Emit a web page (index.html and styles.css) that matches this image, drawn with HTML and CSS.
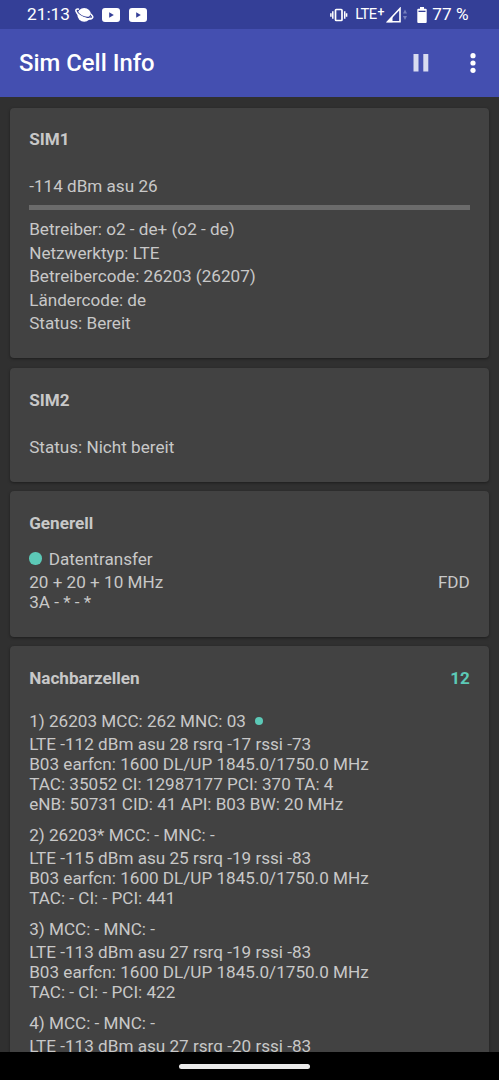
FILE: index.html
```html
<!DOCTYPE html>
<html lang="de">
<head>
<meta charset="utf-8">
<title>Sim Cell Info</title>
<link rel="stylesheet" href="styles.css">
</head>
<body>
<div class="screen">
  <div class="status">
    <span class="clock">21:13</span>
    <svg class="planet" width="20" height="16" viewBox="0 0 20 16"><circle cx="9.2" cy="7.800" r="6.900" fill="#fff"/><path d="M2.600 5C4 8 8.500 10.200 12 10.400 14.500 10.500 15.800 9.400 15.600 7.500" fill="none" stroke="#343f97" stroke-width="1.200"/><path d="M4 2.200C1.600 1.500.500 2.500 1 4.200 1.800 7 6.500 10.800 12 11.700 16.200 12.400 18.600 11.300 17.500 9.100L15.800 7" fill="none" stroke="#fff" stroke-width="1.500"/></svg>
    <svg class="yt" width="18" height="14" viewBox="0 0 18 14"><rect width="18" height="14" rx="3" fill="#fff"/><path d="M7.200 4.300v5.400L11.800 7z" fill="#343f97"/></svg>
    <svg class="yt yt2" width="18" height="14" viewBox="0 0 18 14"><rect width="18" height="14" rx="3" fill="#fff"/><path d="M7.200 4.300v5.400L11.800 7z" fill="#343f97"/></svg>
    <div class="right">
      <svg width="18" height="14" viewBox="0 0 18 14"><rect x="5.500" y="1.500" width="6.500" height="11" rx=".8" fill="none" stroke="#fff" stroke-width="1.700"/><path d="M2.800 3.200v7.600M14.700 3.200v7.600M.9 5.200v3.600M16.600 5.200v3.600" stroke="#fff" stroke-width="1.500"/></svg>
      <span class="lte">LTE<sup>+</sup></span>
      <svg class="signal" width="22" height="16" viewBox="0 0 22 16"><path d="M1.500 14.800H14V1.500z" fill="none" stroke="#fff" stroke-width="1.600"/><path d="M1 15.200L6.500 9.500v5.700z" fill="#fff"/><path d="M17 6.500h4L19 2.500zM17 9h4l-2 4z" fill="#7780bd"/></svg>
      <svg class="battery" width="10" height="16" viewBox="0 0 10 16"><path d="M3 0h4v1.700h1.700q1 0 1 1V15q0 1-1 1H1.300q-1 0-1-1V2.700q0-1 1-1H3z" fill="#fff"/><path d="M1.500 3.700h7v1.300h-7z" fill="#343f97"/></svg>
      <span class="pct">77 %</span>
    </div>
  </div>
  <div class="appbar">
    <h1>Sim Cell Info</h1>
    <svg class="pause" width="16" height="18" viewBox="0 0 16 18"><path d="M.5 0h5v17.500h-5zM10.300 0h5v17.500h-5z" fill="#d8dbf0"/></svg>
    <svg class="more" width="6" height="20" viewBox="0 0 6 20"><g fill="#fff"><circle cx="3" cy="2.700" r="2.600"/><circle cx="3" cy="10" r="2.600"/><circle cx="3" cy="17.300" r="2.600"/></g></svg>
  </div>
  <main>
    <section class="card sim1">
      <h2>SIM1</h2>
      <p class="lead">-114 dBm asu 26</p>
      <div class="bar"></div>
      <p>Betreiber: o2 - de+ (o2 - de)</p>
      <p>Netzwerktyp: LTE</p>
      <p>Betreibercode: 26203 (26207)</p>
      <p>Ländercode: de</p>
      <p>Status: Bereit</p>
    </section>
    <section class="card sim2">
      <h2>SIM2</h2>
      <p class="lead">Status: Nicht bereit</p>
    </section>
    <section class="card general">
      <h2>Generell</h2>
      <p class="transfer"><i class="dot"></i>Datentransfer</p>
      <div class="split"><p>20 + 20 + 10 MHz<br>3A - * - *</p><p>FDD</p></div>
    </section>
    <section class="card cells">
      <div class="head"><h2>Nachbarzellen</h2><h2 class="count">12</h2></div>
      <div class="cell"><p>1) 26203 MCC: 262 MNC: 03<i class="dot small"></i></p>
        <div class="data">LTE -112 dBm asu 28 rsrq -17 rssi -73<br>B03 earfcn: 1600 DL/UP 1845.0/1750.0 MHz<br>TAC: 35052 CI: 12987177 PCI: 370 TA: 4<br>eNB: 50731 CID: 41 API: B03 BW: 20 MHz</div></div>
      <div class="cell"><p>2) 26203* MCC: - MNC: -</p>
        <div class="data">LTE -115 dBm asu 25 rsrq -19 rssi -83<br>B03 earfcn: 1600 DL/UP 1845.0/1750.0 MHz<br>TAC: - CI: - PCI: 441</div></div>
      <div class="cell"><p>3) MCC: - MNC: -</p>
        <div class="data">LTE -113 dBm asu 27 rsrq -19 rssi -83<br>B03 earfcn: 1600 DL/UP 1845.0/1750.0 MHz<br>TAC: - CI: - PCI: 422</div></div>
      <div class="cell"><p>4) MCC: - MNC: -</p>
        <div class="data">LTE -113 dBm asu 27 rsrq -20 rssi -83</div></div>
    </section>
  </main>
  <div class="nav"><div class="pill"></div></div>
</div>
</body>
</html>
```
FILE: styles.css
```css
* { box-sizing: border-box; margin: 0; padding: 0; }
body { background: #303030; color: #c8c8c8; font: 17.12px/23.5px Roboto, sans-serif; }
.screen { width: 499px; height: 1080px; display: flex; flex-direction: column; overflow: hidden; }
.status { height: 29px; flex: none; background: #343f97; color: #fff; display: flex; align-items: center; padding: 1px 30.500px 0 27px; }
.status svg { flex: none; display: block; }
.clock { width: 48px; font-size: 17.3px; }
.yt { margin-left: 6.500px; }
.yt2 { margin-left: 9px; }
.right { margin-left: auto; display: flex; align-items: center; }
.lte { width: 29px; margin-left: 7px; font-size: 14.800px; letter-spacing: -.7px; white-space: nowrap; }
.lte sup { margin-left: 1px; font-size: 12.500px; line-height: 0; font-weight: 500; vertical-align: 3px; }
.signal { margin-left: 2px; }
.battery { margin-left: 9px; }
.pct { margin-left: 5px; font-size: 17.200px; white-space: nowrap; }
.appbar { height: 68px; flex: none; background: #444fb0; display: flex; align-items: center; padding: 0 23.500px 0 19px; }
h1 { color: #fff; font-size: 23.850px; font-weight: 500; flex: 1; padding-top: 2px; }
.more { margin-left: 40.500px; }
main { flex: 1; min-height: 0; overflow: hidden; padding: 10.700px 9.700px 0; }
.card { background: #424242; border-radius: 4px; box-shadow: 0 1px 3px rgba(0,0,0,.4); padding: 20.700px 19.500px 0; margin-bottom: 9.500px; }
h2 { font-size: 17.120px; line-height: 23.500px; font-weight: 700; }
.lead { margin-top: 23.500px; }
.sim1 { height: 250.800px; }
.sim2 { height: 113.800px; }
.general { height: 145.700px; }
.cells { height: 500px; }
.bar { height: 5px; background: #6b6b6b; margin: 6.300px 0 8px; }
.transfer { margin-top: 12.300px; }
.dot { display: inline-block; width: 12.500px; height: 12.500px; border-radius: 50%; background: #5cc9b7; margin-right: 7px; }
.split { display: flex; justify-content: space-between; line-height: 19.800px; margin-top: 1.500px; }
.head { display: flex; justify-content: space-between; }
.count { color: #5cc9b7; }
.head + .cell { margin-top: 19.500px; }
.cell { margin-bottom: 9.500px; }
.data { line-height: 19.800px; margin-top: 1.700px; }
.small { width: 8px; height: 8px; margin: 0 0 2px 9px; }
.nav { height: 28.500px; flex: none; background: #000; display: flex; justify-content: center; padding: 12.500px 10px 0 0; }
.pill { width: 131px; height: 5px; border-radius: 3px; background: #ebebeb; }
```
